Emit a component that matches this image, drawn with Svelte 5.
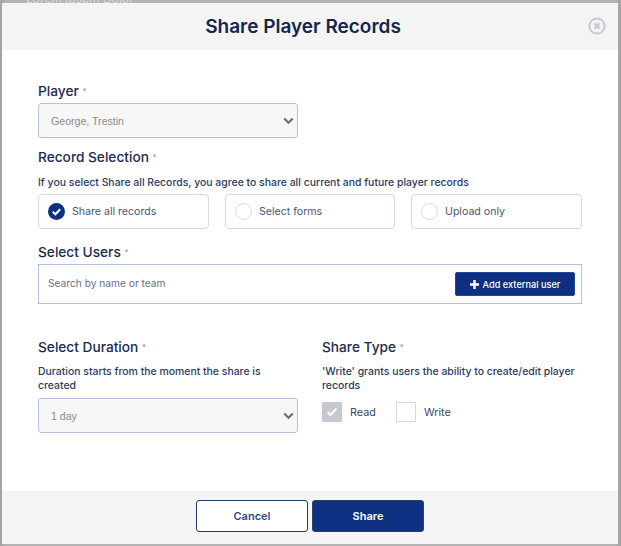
<div class="backdrop">
  <div class="ghost">Lorem Ipsum Dolor</div>
  <div class="modal">
    <header class="head">
      <h1>Share Player Records</h1>
      <button class="close" aria-label="Close">
        <svg width="18" height="18" viewBox="0 0 18 18" fill="none" stroke="#c6c9d2">
          <circle cx="9" cy="9" r="7.6" stroke-width="2" />
          <path d="M6.4 6.4l5.2 5.2M11.6 6.4l-5.2 5.2" stroke-width="2.4" />
        </svg>
      </button>
    </header>
    <main class="body">
      <div class="label first">Player <span class="req">*</span></div>
      <div class="selectbox">
        <select disabled><option>George, Trestin</option></select>
        {@render chevron()}
      </div>

      <div class="label rec">Record Selection <span class="req">*</span></div>
      <p class="hint one">If you select Share all Records, you agree to share all current and future player records</p>
      <div class="radios">
        <div class="radio">
          <svg width="17" height="17" viewBox="0 0 17 17">
            <circle cx="8.5" cy="8.5" r="8.5" fill="#0f3082" />
            <path d="M4.8 8.8l2.6 2.5 4.8-5" fill="none" stroke="#fff" stroke-width="2" />
          </svg>
          <span>Share all records</span>
        </div>
        <div class="radio"><i class="dot"></i><span>Select forms</span></div>
        <div class="radio"><i class="dot"></i><span>Upload only</span></div>
      </div>

      <div class="label users">Select Users <span class="req">*</span></div>
      <div class="search">
        <input placeholder="Search by name or team" />
        <button class="add">
          <svg width="9" height="9" viewBox="0 0 9 9"><path d="M4.5 0v9M0 4.5h9" stroke="#fff" stroke-width="2.4" /></svg>
          Add external user
        </button>
      </div>

      <div class="cols">
        <section>
          <div class="label">Select Duration <span class="req">*</span></div>
          <p class="hint two">Duration starts from the moment the share is created</p>
          <div class="selectbox">
            <select disabled><option>1 day</option></select>
            {@render chevron()}
          </div>
        </section>
        <section>
          <div class="label">Share Type <span class="req">*</span></div>
          <p class="hint two">'Write' grants users the ability to create/edit player records</p>
          <div class="checks">
            <span class="box on">
              <svg width="12" height="10" viewBox="0 0 12 10"><path d="M1.5 5.2l3 2.8 6-6.4" fill="none" stroke="#fff" stroke-width="2" /></svg>
            </span>
            <span class="cl">Read</span>
            <span class="box"></span>
            <span class="cl">Write</span>
          </div>
        </section>
      </div>
    </main>
    <footer class="foot">
      <button class="btn ghostbtn">Cancel</button>
      <button class="btn solid">Share</button>
    </footer>
  </div>
</div>

{#snippet chevron()}
  <svg class="chev" width="11" height="8" viewBox="0 0 11 8"><path d="M1.2 1.5l4.3 4.3 4.3-4.3" fill="none" stroke="#6d6f75" stroke-width="2.2" /></svg>
{/snippet}

<style>
  :global(body) { margin: 0; }
  * { box-sizing: border-box; }
  .backdrop {
    position: relative;
    width: 621px;
    height: 546px;
    overflow: hidden;
    background: linear-gradient(90deg, #a3a3a3 0, #b4b4b4 1%, #b4b4b4 99%, #a0a0a0 100%);
    padding: 3px 3px 2px 2px;
    font-family: Inter, "Liberation Sans", sans-serif;
    color: #1b2a52;
  }
  .ghost {
    position: absolute;
    left: 26px;
    top: -9px;
    font-size: 12px;
    color: #d9d9d9;
  }
  .modal {
    position: relative;
    display: flex;
    flex-direction: column;
    height: 100%;
    background: #fff;
  }
  .head {
    flex: 0 0 47px;
    display: flex;
    align-items: center;
    justify-content: center;
    padding-right: 14px;
    background: #f4f4f5;
    position: relative;
  }
  h1 {
    margin: 0;
    font-size: 19px;
    line-height: 22px;
    font-weight: 600;
    color: #14264f;
  }
  .close {
    position: absolute;
    right: 12px;
    top: 14px;
    width: 18px;
    height: 18px;
    padding: 0;
    border: 0;
    background: none;
    display: block;
  }
  .close svg { display: block; }
  .body {
    flex: 1;
    padding: 0 36px;
  }
  .label {
    font-size: 13.7px;
    line-height: 16px;
    font-weight: 500;
    color: #1b2a52;
  }
  .label.first { margin-top: 33px; margin-bottom: 4px; }
  .label.rec { margin-top: 11px; }
  .label.users { margin-top: 15px; margin-bottom: 4px; }
  .req { font-size: 8px; color: #8a8f9c; vertical-align: 2px; font-weight: 400; }
  .hint {
    margin: 0;
    font-size: 10.45px;
    line-height: 14px;
    font-weight: 500;
    color: #2c3a5e;
  }
  .hint.one { margin-top: 11px; margin-bottom: 4px; white-space: nowrap; }
  .hint.two { margin-top: 10px; margin-bottom: 5px; height: 28px; }
  .selectbox { position: relative; width: 260px; height: 35px; }
  select {
    appearance: none;
    width: 100%;
    height: 100%;
    padding: 0 12px;
    border: 1px solid #b3c2dc;
    border-radius: 3px;
    background: #f7f7f8;
    font-family: "Liberation Sans", Arial, sans-serif;
    font-size: 10.6px;
    color: #8b8b8b;
    opacity: 1;
  }
  .chev { position: absolute; right: 4px; top: 14px; }
  .radios {
    display: grid;
    grid-template-columns: 171px 170px 171px;
    column-gap: 16px;
  }
  .radio {
    height: 35px;
    display: flex;
    align-items: center;
    gap: 7px;
    padding-left: 9px;
    border: 1px solid #d5d9e6;
    border-radius: 4px;
    font-size: 10.6px;
    color: #4b5570;
  }
  .dot {
    width: 17px;
    height: 17px;
    border: 1px solid #d5d9e6;
    border-radius: 50%;
  }
  .search {
    height: 40px;
    display: flex;
    align-items: center;
    justify-content: space-between;
    padding: 0 6px 0 9px;
    border: 1px solid #b3c2dc;
  }
  input {
    flex: 1;
    border: 0;
    outline: 0;
    padding: 0 0 2px;
    background: none;
    font: 400 10.2px Inter, sans-serif;
  }
  input::placeholder { color: #6a7080; opacity: 1; }
  .add {
    width: 120px;
    height: 24px;
    display: flex;
    align-items: center;
    justify-content: center;
    gap: 4px;
    padding: 0;
    border: 1px solid #1c4a96;
    border-radius: 2px;
    background: #0f3082;
    color: #fff;
    font: 500 9.2px Inter, sans-serif;
  }
  .cols {
    display: grid;
    grid-template-columns: 260px 260px;
    column-gap: 24px;
    margin-top: 35px;
  }
  .checks {
    display: flex;
    align-items: center;
    margin-top: 9px;
    font-size: 10.8px;
    color: #3c4764;
  }
  .box {
    width: 20px;
    height: 20px;
    display: flex;
    align-items: center;
    justify-content: center;
    border: 1px solid #d5d9e6;
  }
  .box.on { background: #c6c8cf; border-color: #c6c8cf; }
  .cl { margin-left: 8px; margin-right: 20px; }
  .foot {
    flex: 0 0 53px;
    display: flex;
    justify-content: center;
    align-items: flex-start;
    gap: 4px;
    padding-top: 9px;
    background: #f4f4f5;
  }
  .btn {
    width: 112px;
    height: 32px;
    border-radius: 3px;
    font: 600 11px Inter, sans-serif;
  }
  .ghostbtn { background: #fff; border: 1px solid #1f3a70; color: #2a4a86; }
  .solid { background: #0f3082; border: 1px solid #2a3f70; color: #fff; }
</style>
